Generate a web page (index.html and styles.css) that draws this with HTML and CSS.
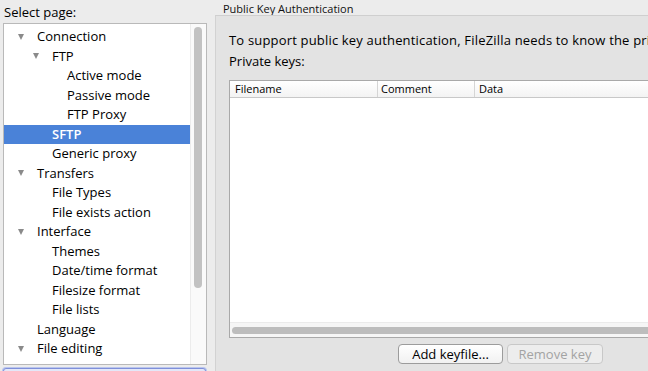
FILE: index.html
```html
<!DOCTYPE html>
<html>
<head>
<meta charset="utf-8">
<link rel="stylesheet" href="styles.css">
</head>
<body>
<div class="window">
  <aside class="sidebar">
    <div class="label">Select page:</div>
    <div class="tree">
      <ul class="rows">
        <li class="row l0"><span class="tw open"></span>Connection</li>
        <li class="row l1"><span class="tw open"></span>FTP</li>
        <li class="row l2"><span class="tw"></span>Active mode</li>
        <li class="row l2"><span class="tw"></span>Passive mode</li>
        <li class="row l2"><span class="tw"></span>FTP Proxy</li>
        <li class="row l1 selected"><span class="tw"></span>SFTP</li>
        <li class="row l1"><span class="tw"></span>Generic proxy</li>
        <li class="row l0"><span class="tw open"></span>Transfers</li>
        <li class="row l1"><span class="tw"></span>File Types</li>
        <li class="row l1"><span class="tw"></span>File exists action</li>
        <li class="row l0"><span class="tw open"></span>Interface</li>
        <li class="row l1"><span class="tw"></span>Themes</li>
        <li class="row l1"><span class="tw"></span>Date/time format</li>
        <li class="row l1"><span class="tw"></span>Filesize format</li>
        <li class="row l1"><span class="tw"></span>File lists</li>
        <li class="row l0"><span class="tw"></span>Language</li>
        <li class="row l0"><span class="tw open"></span>File editing</li>
      </ul>
      <div class="vscroll"><div class="vthumb"></div></div>
    </div>
    <div class="focus-field"></div>
  </aside>
  <main class="panel">
    <div class="group-title">Public Key Authentication</div>
    <section class="group">
      <p class="intro">To support public key authentication, FileZilla needs to know the private keys to use.</p>
      <div class="sub">Private keys:</div>
      <div class="list">
        <div class="list-head">
          <span class="col c1">Filename</span>
          <span class="col c2">Comment</span>
          <span class="col c3">Data</span>
        </div>
        <div class="list-body"></div>
        <div class="hscroll"><div class="hthumb"></div></div>
      </div>
      <div class="buttons">
        <button class="btn">Add keyfile...</button>
        <button class="btn disabled" disabled>Remove key</button>
      </div>
    </section>
  </main>
</div>
</body>
</html>
```

FILE: styles.css
```css
* { box-sizing: border-box; }
html, body { margin: 0; padding: 0; }
body {
  width: 648px;
  height: 371px;
  overflow: hidden;
  background: #ececec;
  font-family: "Open Sans", "DejaVu Sans", sans-serif;
  font-size: 13px;
  color: #000;
}
.window {
  display: flex;
  width: 648px;
  height: 371px;
  overflow: hidden;
}
.sidebar {
  width: 207px;
  flex: none;
  padding-left: 3px;
  display: flex;
  flex-direction: column;
}
.label {
  flex: none;
  height: 23px;
  line-height: 25px;
  padding-left: 1px;
}
.tree {
  flex: none;
  height: 342px;
  width: 204px;
  border: 1px solid #b9b9b9;
  background: #fff;
  display: flex;
}
.rows {
  list-style: none;
  margin: 0;
  padding: 3px 0 0 0;
  width: 186px;
  flex: none;
}
.row {
  height: 19.5px;
  line-height: 19.5px;
  white-space: nowrap;
  display: flex;
  align-items: center;
}
.row.l0 { padding-left: 14px; }
.row.l1 { padding-left: 29px; }
.row.l2 { padding-left: 44px; }
.row.selected {
  background: #4a82d8;
  color: #fff;
  font-weight: 600;
}
.tw {
  width: 19px;
  height: 6px;
  flex: none;
  position: relative;
}
.tw.open::before {
  content: "";
  position: absolute;
  left: 0;
  top: 0;
  border-left: 3.5px solid transparent;
  border-right: 3.5px solid transparent;
  border-top: 6px solid #8a8a8a;
}
.vscroll {
  flex: 1;
  border-left: 1px solid #ececec;
  background: #fafafa;
  padding: 3px 0 0 3px;
}
.vthumb {
  width: 8px;
  height: 261px;
  border-radius: 4px;
  background: #c2c2c2;
}
.focus-field {
  flex: none;
  margin-top: 3px;
  width: 203px;
  height: 12px;
  border: 1px solid #7f8fd9;
  border-radius: 3px;
  background: #e3e7f8;
  box-shadow: 0 0 0 1px #b9c5ee;
}
.panel {
  flex: 1;
  min-width: 0;
  display: flex;
  flex-direction: column;
  overflow: hidden;
}
.group-title {
  flex: none;
  height: 15px;
  font-size: 11px;
  line-height: 13px;
  padding: 2px 0 0 16px;
  color: #111;
}
.group {
  margin-left: 8px;
  width: 460px;
  flex: 1;
  background: #e3e3e3;
  border-top: 1px solid #cfcfcf;
  border-left: 1px solid #d2d2d2;
  padding-left: 13px;
  overflow: hidden;
}
.intro {
  margin: 15px 0 0 0;
  height: 18px;
  line-height: 18px;
  white-space: nowrap;
  letter-spacing: 0.18px;
}
.sub {
  margin-top: 3px;
  height: 18px;
  line-height: 18px;
}
.list {
  margin-top: 10px;
  width: 440px;
  height: 258px;
  border: 1px solid #a9a9a9;
  background: #fff;
  display: flex;
  flex-direction: column;
}
.list-head {
  height: 17px;
  display: flex;
  border-bottom: 1px solid #c8c8c8;
  background: linear-gradient(#ffffff, #f3f3f3);
  font-size: 11px;
  line-height: 16px;
}
.col { padding-left: 5px; }
.c1 { width: 147px; }
.c2 { width: 97px; border-left: 1px solid #d5d5d5; padding-left: 3px; }
.c3 { flex: 1; border-left: 1px solid #d5d5d5; padding-left: 4px; }
.list-body { flex: 1; }
.hscroll {
  height: 15px;
  background: #f6f6f6;
  border-top: 1px solid #ebebeb;
  padding: 4px 0 0 2px;
}
.hthumb {
  height: 7px;
  border-radius: 4px;
  background: #bdbdbd;
}
.buttons {
  margin-top: 6px;
  padding-left: 169px;
  display: flex;
  gap: 4px;
}
.btn {
  height: 20px;
  padding: 0;
  font-family: "Open Sans", "DejaVu Sans", sans-serif;
  font-size: 13px;
  line-height: 18px;
  color: #000;
  background: linear-gradient(#ffffff, #f1f1f1);
  border: 1px solid #9c9c9c;
  border-radius: 4px;
  width: 105px;
}
.btn.disabled {
  width: 96px;
  color: #a3a3a3;
  background: #ededed;
  border-color: #c8c8c8;
}
```
